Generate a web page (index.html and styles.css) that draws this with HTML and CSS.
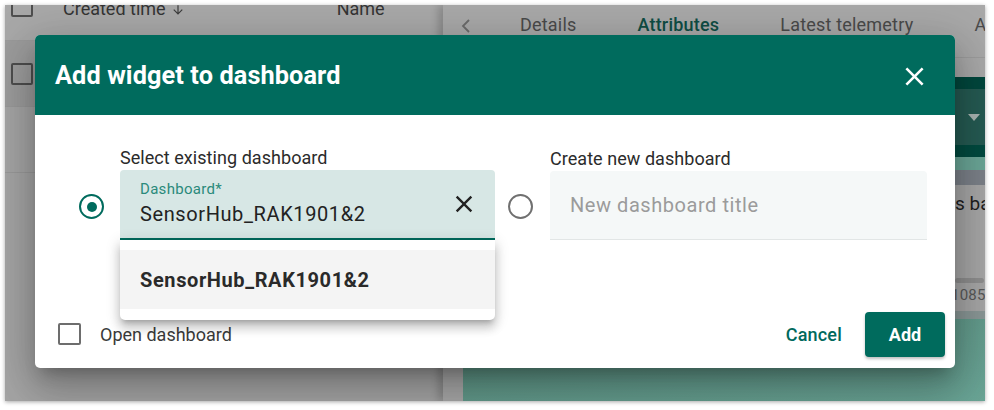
FILE: index.html
```html
<!DOCTYPE html>
<html>
<head>
<meta charset="utf-8">
<link rel="stylesheet" href="styles.css">
</head>
<body>
<div class="frame">
  <div class="left-panel">
    <div class="thead">
      <span class="cb cb-dim"></span>
      <span class="th th-time">Created time</span>
      <svg class="arrow" width="14" height="14" viewBox="0 0 24 24"><path fill="#3c3c3c" d="M20 12l-1.41-1.41L13 16.17V4h-2v12.17l-5.58-5.59L4 12l8 8 8-8z"/></svg>
      <span class="th th-name">Name</span>
    </div>
    <div class="trow trow-hl">
      <span class="cb cb-dim"></span>
    </div>
    <div class="trow"></div>
  </div>
  <div class="right-panel">
    <div class="tabs">
      <span class="chev"><svg width="10" height="16" viewBox="0 0 10 16"><path d="M8 2 L2 8 L8 14" fill="none" stroke="#6a6a6a" stroke-width="1.8"/></svg></span>
      <span class="tab">Details</span>
      <span class="tab tab-active">Attributes</span>
      <span class="tab">Latest telemetry</span>
      <span class="tab">Alarms</span>
    </div>
    <div class="rbody">
      <div class="w-dark"></div>
      <div class="w-mid"><span class="tri"></span></div>
      <div class="w-dark2"></div>
      <div class="w-light"></div>
      <div class="w-blue"></div>
      <div class="w-card">
        <div class="w-text">s based</div>
        <div class="w-bar"></div>
        <div class="w-num">1085</div>
      </div>
      <div class="w-strip"></div>
      <div class="w-teal"></div>
    </div>
  </div>

  <div class="dialog">
    <div class="dlg-head">
      <h2 class="dlg-title">Add widget to dashboard</h2>
      <svg class="dlg-close" width="31" height="31" viewBox="0 0 24 24"><path fill="#fff" d="M19 6.41L17.59 5 12 10.59 6.41 5 5 6.41 10.59 12 5 17.59 6.41 19 12 13.41 17.59 19 19 17.59 13.41 12z"/></svg>
    </div>
    <div class="dlg-body">
      <div class="radio radio-on"><span class="dot"></span></div>
      <div class="col">
        <div class="col-label">Select existing dashboard</div>
        <div class="field field-filled">
          <div class="field-inner">
            <div class="flabel">Dashboard*</div>
            <div class="fvalue">SensorHub_RAK1901&amp;2</div>
          </div>
          <svg class="fclear" width="28" height="28" viewBox="0 0 24 24"><path fill="#222" d="M19 6.41L17.59 5 12 10.59 6.41 5 5 6.41 10.59 12 5 17.59 6.41 19 12 13.41 17.59 19 19 17.59 13.41 12z"/></svg>
        </div>
      </div>
      <div class="radio radio-off"></div>
      <div class="col">
        <div class="col-label">Create new dashboard</div>
        <div class="field field-empty">
          <div class="placeholder">New dashboard title</div>
        </div>
      </div>
    </div>
    <div class="dlg-foot">
      <label class="chk"><span class="cb"></span><span class="chk-text">Open dashboard</span></label>
      <div class="actions">
        <span class="btn-text">Cancel</span>
        <span class="btn-fill">Add</span>
      </div>
    </div>
    <div class="dropdown">
      <div class="option">SensorHub_RAK1901&amp;2</div>
    </div>
  </div>
</div>
</body>
</html>
```

FILE: styles.css
```css
* { box-sizing: border-box; }
html, body { margin: 0; padding: 0; background: #ffffff; }
body { font-family: Roboto, "Noto Sans", "Liberation Sans", sans-serif; width: 994px; height: 410px; overflow: hidden; }

.frame {
  position: relative;
  margin: 5px 0 0 5px;
  width: 980px;
  height: 396px;
  display: flex;
  overflow: hidden;
  box-shadow: 0 1px 4px rgba(0,0,0,0.35);
}

/* left panel (dimmed table) */
.left-panel { width: 438px; background: #a5a5a5; display: flex; flex-direction: column; }
.thead { height: 36px; background: #a8a8a8; display: flex; align-items: flex-start; border-bottom: 1px solid #9a9a9a; }
.cb { display: inline-block; width: 22px; height: 22px; border: 2px solid #6f6f6f; border-radius: 2px; flex: none; }
.cb-dim { border-color: #4e4e4e; }
.thead .cb { margin: -10px 0 0 6px; }
.th { font-size: 18px; color: #343434; margin-top: -7px; line-height: 22px; }
.th-time { margin-left: 30px; }
.arrow { margin: -2px 0 0 5px; flex: none; }
.th-name { margin-left: 152px; }
.trow { height: 66px; display: flex; align-items: center; border-bottom: 1px solid #999; }
.trow-hl { background: #9c9c9c; }
.trow .cb { margin-left: 6px; }

/* right panel */
.right-panel { width: 542px; background: #a8a8a8; display: flex; flex-direction: column; box-shadow: -5px 0 8px rgba(0,0,0,0.18); z-index: 1; }
.tabs { height: 53px; display: flex; align-items: flex-start; gap: 61px; padding: 9px 0 0 18px; border-bottom: 1px solid #9c9c9c; white-space: nowrap; overflow: hidden; }
.chev { display: flex; margin-right: -12px; margin-top: 4px; }
.tab { font-size: 18px; color: #4a4a4a; letter-spacing: 0.2px; line-height: 22px; }
.tab-active { color: #0f4d44; font-weight: 500; }
.rbody { flex: 1; display: flex; flex-direction: column; margin-left: 20px; padding-top: 19px; }
.w-dark { height: 12px; background: #00473d; }
.w-mid { height: 56px; background: #255a52; display: flex; justify-content: flex-end; align-items: center; padding-right: 5px; }
.tri { width: 0; height: 0; border-left: 6px solid transparent; border-right: 6px solid transparent; border-top: 7px solid #a9b4b1; }
.w-dark2 { height: 12px; background: #004a3f; }
.w-light { height: 13px; background: #6aa596; }
.w-blue { height: 15px; background: #7b8088; }
.w-card { height: 126px; background: #a6a6a6; padding-left: 492px; overflow: hidden; white-space: nowrap; }
.w-text { font-size: 19px; color: #1e1e1e; margin-top: 8px; line-height: 22px; }
.w-bar { height: 5px; width: 29px; margin-top: 63px; background: #8e8e8e; border-radius: 3px; }
.w-num { font-size: 15px; color: #585858; margin-top: 3px; letter-spacing: 0.2px; margin-left: -4px; }
.w-strip { height: 8px; background: #8a9796; }
.w-teal { flex: 1; background: linear-gradient(170deg, #5a8f80, #6aa596); }

/* dialog */
.dialog {
  position: absolute;
  left: 30px; top: 30px;
  width: 920px; height: 333px;
  background: #fff;
  border-radius: 5px;
  z-index: 5;
  display: flex; flex-direction: column;
  box-shadow: 0 11px 15px -7px rgba(0,0,0,.25), 0 24px 38px 3px rgba(0,0,0,.16), 0 9px 46px 8px rgba(0,0,0,.14);
}
.dlg-head { height: 80px; background: #006b5d; border-radius: 5px 5px 0 0; display: flex; align-items: center; justify-content: space-between; padding: 0 25px 0 20px; }
.dlg-title { margin: 0; color: #fff; font-size: 25.3px; font-weight: 700; letter-spacing: 0.1px; }
.dlg-close { display: block; margin-top: 2px; }

.dlg-body { display: grid; grid-template-columns: 25px 375px 25px 375px; column-gap: 16px; padding: 32px 0 0 44px; align-items: end; }
.dlg-body > :nth-child(3) { margin-left: -3px; }
.dlg-body > :nth-child(4) { margin-left: -2px; }
.radio { width: 25px; height: 25px; border-radius: 50%; border: 2.5px solid #707070; margin-bottom: 21px; display: flex; align-items: center; justify-content: center; }
.radio-on { border-color: #006b5d; }
.dot { width: 10px; height: 10px; border-radius: 50%; background: #006b5d; }
.col-label { font-size: 18px; color: #2b2b2b; line-height: 22px; margin-bottom: 1px; letter-spacing: 0.05px; }
.field { height: 70px; border-radius: 4px 4px 0 0; position: relative; display: flex; align-items: center; }
.field-filled { background: #d7e7e5; border-bottom: 2px solid #006b5d; padding: 0 17px 0 20px; justify-content: space-between; }
.field-empty { background: #f5f8f8; border-bottom: 1px solid #e2e6e6; padding: 0 20px; height: 69px; }
.field-inner { display: flex; flex-direction: column; }
.flabel { font-size: 15px; color: #2a8a7b; line-height: 18px; letter-spacing: 0.3px; margin-bottom: 3px; margin-top: -2px; }
.fvalue { font-size: 20px; color: #222; line-height: 26px; letter-spacing: 0.6px; }
.fclear { display: block; }
.placeholder { font-size: 20px; color: #9b9b9b; letter-spacing: 0.55px; }

.dlg-foot { margin-top: auto; height: 56px; display: flex; align-items: flex-start; justify-content: space-between; padding: 0 10px 0 23px; }
.chk { display: flex; align-items: center; margin-top: 11px; }
.chk .cb { width: 23px; height: 22px; border-color: #6d6d6d; }
.chk-text { font-size: 18px; color: #3a3a3a; margin-left: 19px; }
.actions { display: flex; align-items: center; gap: 23px; }
.btn-text { font-size: 18px; font-weight: 500; color: #00695c; letter-spacing: 0.2px; }
.btn-fill { width: 80px; height: 45px; background: #006b5d; color: #fff; font-size: 18px; font-weight: 700; display: flex; align-items: center; justify-content: center; border-radius: 4px; box-shadow: 0 2px 3px rgba(0,0,0,.25); }

.dropdown {
  position: absolute;
  left: 85px; top: 205px;
  width: 375px; height: 80px;
  background: #fff;
  border-radius: 0 0 5px 5px;
  padding: 10px 0 11px;
  box-shadow: 0 5px 5px -3px rgba(0,0,0,.2), 0 8px 10px 1px rgba(0,0,0,.14), 0 3px 14px 2px rgba(0,0,0,.12);
}
.option { height: 59px; background: #f4f4f4; display: flex; align-items: center; padding-left: 20px; font-size: 20px; font-weight: 700; color: #2a2a2a; letter-spacing: 0.6px; }
```
